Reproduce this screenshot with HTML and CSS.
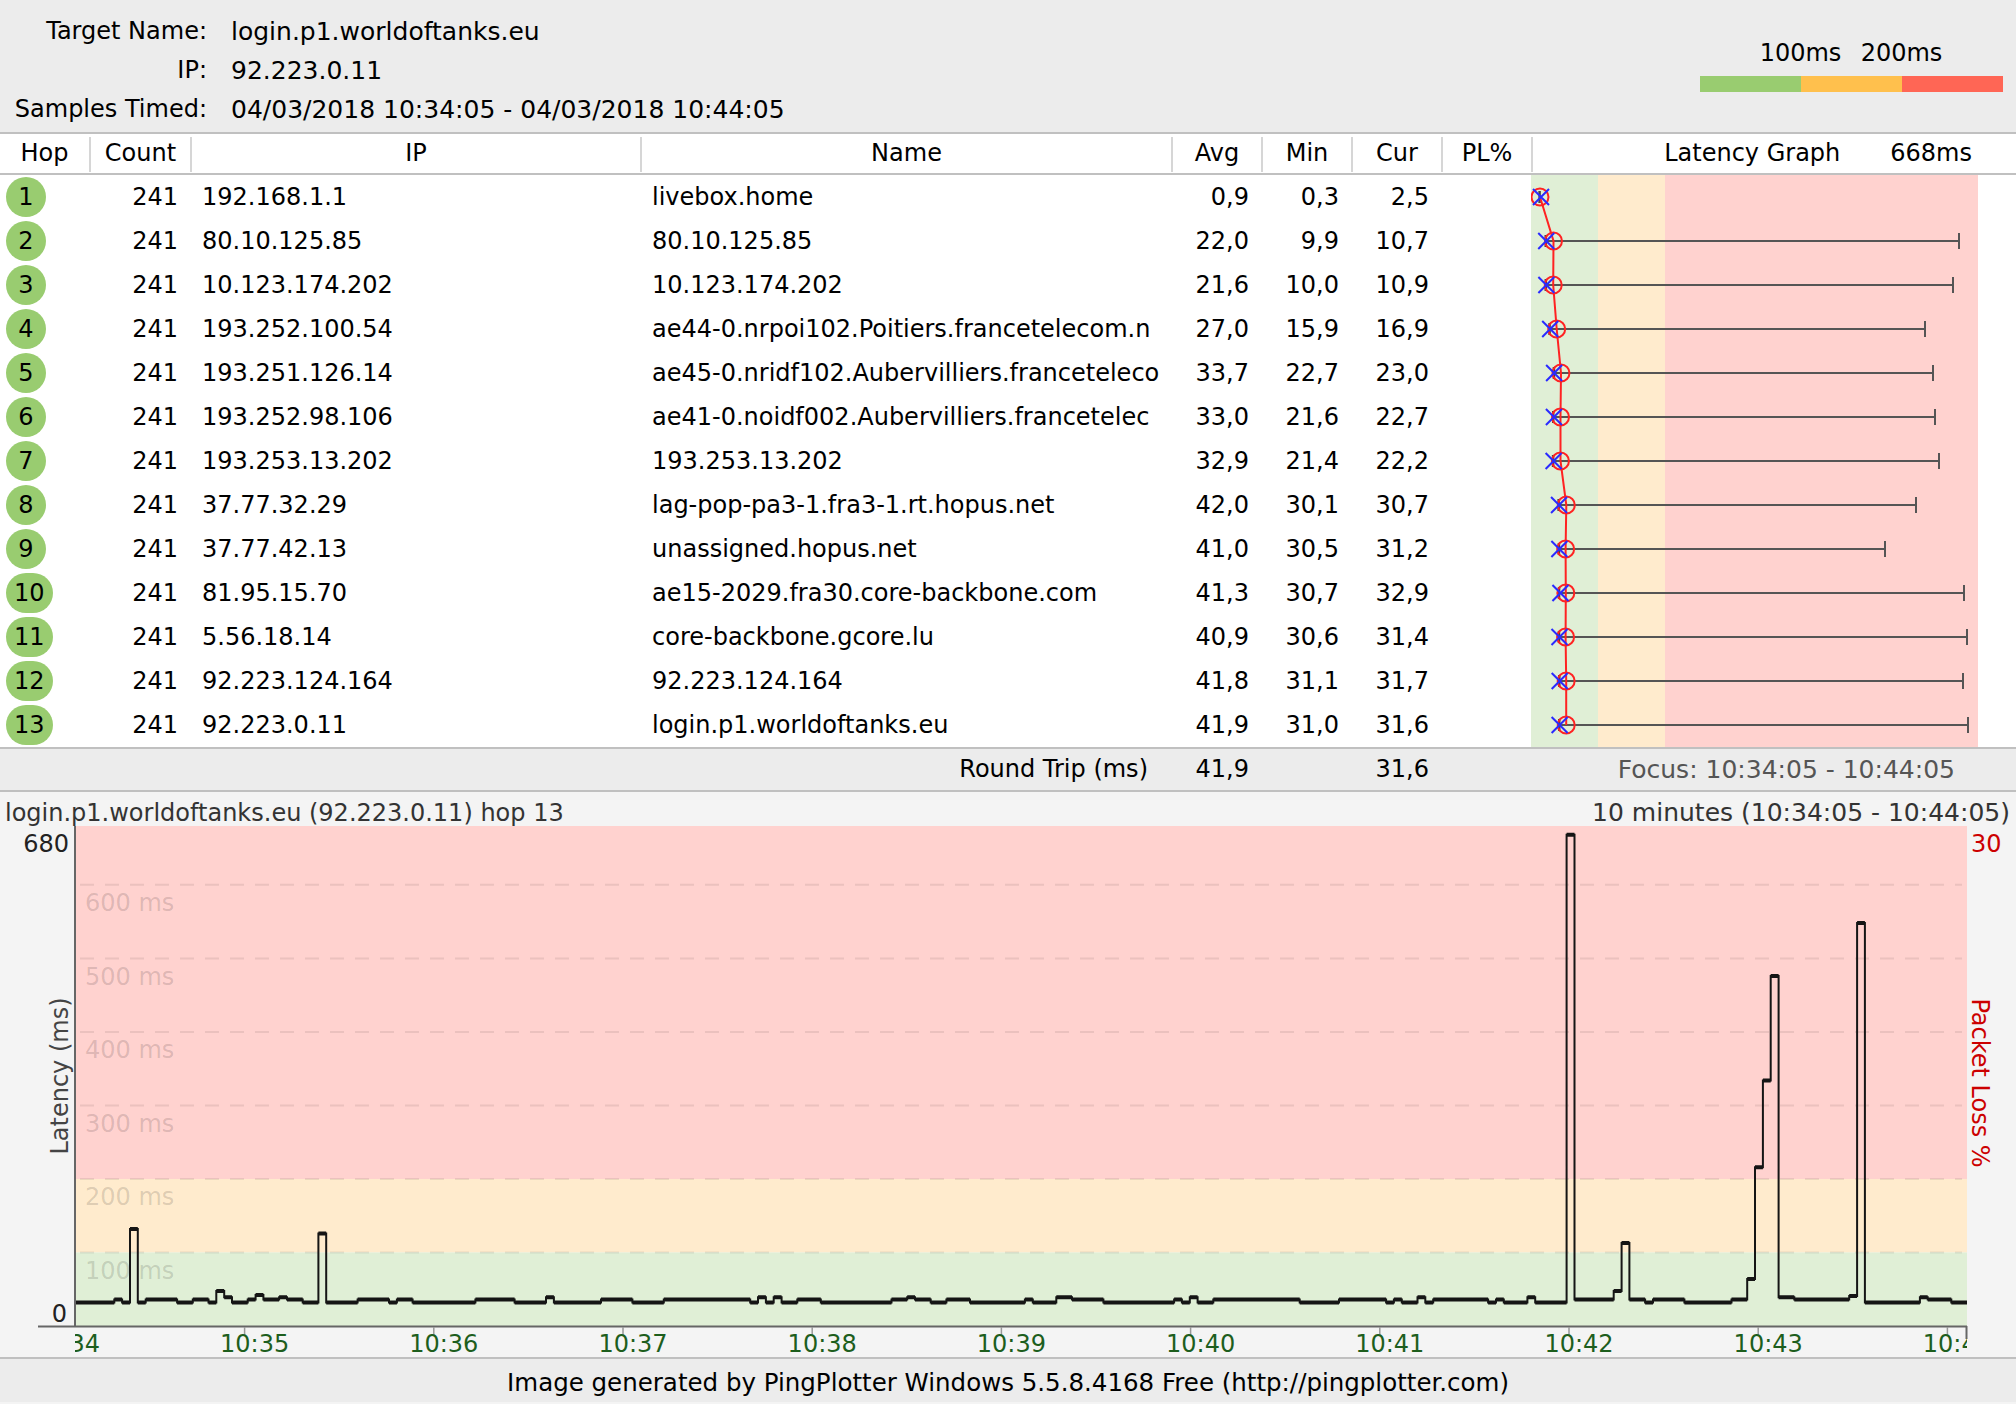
FILE: index.html
```html
<!DOCTYPE html>
<html lang="en">

<head>
  <meta charset="UTF-8">
  <title>PingPlotter - login.p1.worldoftanks.eu</title>
  <link rel="stylesheet" href="styles.css">
</head>

<body>
  <div class="summary">
    <div class="target-info">
      <span class="label">Target Name:</span><span>login.p1.worldoftanks.eu</span>
      <span class="label">IP:</span><span>92.223.0.11</span>
      <span class="label">Samples Timed:</span><span>04/03/2018 10:34:05 - 04/03/2018 10:44:05</span>
    </div>
    <div class="legend">
      <div class="legend-labels"><span>100ms</span><span>200ms</span></div>
      <div class="legend-bar"><span class="good"></span><span class="warn"></span><span class="bad"></span></div>
    </div>
  </div>

  <div class="hop-head">
    <div>Hop</div>
    <div>Count</div>
    <div>IP</div>
    <div>Name</div>
    <div>Avg</div>
    <div>Min</div>
    <div>Cur</div>
    <div>PL%</div>
    <div class="graph-head"><span>Latency Graph</span><span>668ms</span></div>
  </div>

  <div class="hops">
    <div class="hop"><span class="hop-num">1</span></div><div class="num">241</div><div class="ip">192.168.1.1</div><div class="name">livebox.home</div><div class="num">0,9</div><div class="num">0,3</div><div class="num">2,5</div><div></div>
    <div class="hop"><span class="hop-num">2</span></div><div class="num">241</div><div class="ip">80.10.125.85</div><div class="name">80.10.125.85</div><div class="num">22,0</div><div class="num">9,9</div><div class="num">10,7</div><div></div>
    <div class="hop"><span class="hop-num">3</span></div><div class="num">241</div><div class="ip">10.123.174.202</div><div class="name">10.123.174.202</div><div class="num">21,6</div><div class="num">10,0</div><div class="num">10,9</div><div></div>
    <div class="hop"><span class="hop-num">4</span></div><div class="num">241</div><div class="ip">193.252.100.54</div><div class="name">ae44-0.nrpoi102.Poitiers.francetelecom.n</div><div class="num">27,0</div><div class="num">15,9</div><div class="num">16,9</div><div></div>
    <div class="hop"><span class="hop-num">5</span></div><div class="num">241</div><div class="ip">193.251.126.14</div><div class="name">ae45-0.nridf102.Aubervilliers.franceteleco</div><div class="num">33,7</div><div class="num">22,7</div><div class="num">23,0</div><div></div>
    <div class="hop"><span class="hop-num">6</span></div><div class="num">241</div><div class="ip">193.252.98.106</div><div class="name">ae41-0.noidf002.Aubervilliers.francetelec</div><div class="num">33,0</div><div class="num">21,6</div><div class="num">22,7</div><div></div>
    <div class="hop"><span class="hop-num">7</span></div><div class="num">241</div><div class="ip">193.253.13.202</div><div class="name">193.253.13.202</div><div class="num">32,9</div><div class="num">21,4</div><div class="num">22,2</div><div></div>
    <div class="hop"><span class="hop-num">8</span></div><div class="num">241</div><div class="ip">37.77.32.29</div><div class="name">lag-pop-pa3-1.fra3-1.rt.hopus.net</div><div class="num">42,0</div><div class="num">30,1</div><div class="num">30,7</div><div></div>
    <div class="hop"><span class="hop-num">9</span></div><div class="num">241</div><div class="ip">37.77.42.13</div><div class="name">unassigned.hopus.net</div><div class="num">41,0</div><div class="num">30,5</div><div class="num">31,2</div><div></div>
    <div class="hop"><span class="hop-num wide">10</span></div><div class="num">241</div><div class="ip">81.95.15.70</div><div class="name">ae15-2029.fra30.core-backbone.com</div><div class="num">41,3</div><div class="num">30,7</div><div class="num">32,9</div><div></div>
    <div class="hop"><span class="hop-num wide">11</span></div><div class="num">241</div><div class="ip">5.56.18.14</div><div class="name">core-backbone.gcore.lu</div><div class="num">40,9</div><div class="num">30,6</div><div class="num">31,4</div><div></div>
    <div class="hop"><span class="hop-num wide">12</span></div><div class="num">241</div><div class="ip">92.223.124.164</div><div class="name">92.223.124.164</div><div class="num">41,8</div><div class="num">31,1</div><div class="num">31,7</div><div></div>
    <div class="hop"><span class="hop-num wide">13</span></div><div class="num">241</div><div class="ip">92.223.0.11</div><div class="name">login.p1.worldoftanks.eu</div><div class="num">41,9</div><div class="num">31,0</div><div class="num">31,6</div><div></div>
    <div class="hop-graph">
      <svg id="hop-graph" width="485" height="572" viewBox="0 0 485 572"></svg>
    </div>
  </div>

  <div class="round-trip">
    <div class="rt-label">Round Trip (ms)</div>
    <div class="num">41,9</div>
    <div></div>
    <div class="num">31,6</div>
    <div></div>
    <div class="focus">Focus: 10:34:05 - 10:44:05</div>
  </div>

  <div class="graph">
    <div class="graph-title">
      <span>login.p1.worldoftanks.eu (92.223.0.11) hop 13</span>
      <span class="span-info">10 minutes (10:34:05 - 10:44:05)</span>
    </div>
    <svg class="plot" width="2016" height="531" viewBox="0 0 2016 531">
      <defs>
        <clipPath id="time-clip"><rect x="75" y="500" width="1892" height="31"/></clipPath>
      </defs>
      <rect x="75" y="0" width="1892" height="353" fill="#ffd2cf"/>
      <rect x="75" y="353" width="1892" height="73.5" fill="#ffebcd"/>
      <rect x="75" y="426.5" width="1892" height="73.5" fill="#e0efd6"/>

      <g class="grid">
        <line x1="80" y1="58.8" x2="1962" y2="58.8"/>
        <line x1="80" y1="132.4" x2="1962" y2="132.4"/>
        <line x1="80" y1="205.9" x2="1962" y2="205.9"/>
        <line x1="80" y1="279.4" x2="1962" y2="279.4"/>
        <line x1="80" y1="353" x2="1962" y2="353"/>
        <line x1="80" y1="426.5" x2="1962" y2="426.5"/>
      </g>
      <g class="grid-labels">
        <text x="85" y="85">600 ms</text>
        <text x="85" y="158.5">500 ms</text>
        <text x="85" y="232">400 ms</text>
        <text x="85" y="305.5">300 ms</text>
        <text x="85" y="379">200 ms</text>
        <text x="85" y="452.5">100 ms</text>
      </g>

      <path id="latency-steps" class="latency-steps" d=""/>
      <path id="latency-levels" class="latency-levels" d=""/>

      <g class="axis">
        <line x1="75" y1="0" x2="75" y2="501"/>
        <line x1="38" y1="500.5" x2="1967" y2="500.5"/>
        <line x1="1966.5" y1="500" x2="1966.5" y2="513"/>
      </g>
      <g class="ticks">
        <line x1="244.6" y1="501" x2="244.6" y2="509"/>
        <line x1="433.8" y1="501" x2="433.8" y2="509"/>
        <line x1="623" y1="501" x2="623" y2="509"/>
        <line x1="812.2" y1="501" x2="812.2" y2="509"/>
        <line x1="1001.4" y1="501" x2="1001.4" y2="509"/>
        <line x1="1190.6" y1="501" x2="1190.6" y2="509"/>
        <line x1="1379.8" y1="501" x2="1379.8" y2="509"/>
        <line x1="1569" y1="501" x2="1569" y2="509"/>
        <line x1="1758.2" y1="501" x2="1758.2" y2="509"/>
        <line x1="1947.4" y1="501" x2="1947.4" y2="509"/>
      </g>
      <g class="time-labels" clip-path="url(#time-clip)">
        <text x="65.4" y="526">10:34</text>
        <text x="254.6" y="526">10:35</text>
        <text x="443.8" y="526">10:36</text>
        <text x="633" y="526">10:37</text>
        <text x="822.2" y="526">10:38</text>
        <text x="1011.4" y="526">10:39</text>
        <text x="1200.6" y="526">10:40</text>
        <text x="1389.8" y="526">10:41</text>
        <text x="1579" y="526">10:42</text>
        <text x="1768.2" y="526">10:43</text>
        <text x="1957.4" y="526">10:44</text>
      </g>

      <text class="y-value" x="69" y="26">680</text>
      <text class="y-value" x="67" y="496">0</text>
      <text class="axis-title" transform="translate(68 250) rotate(-90)">Latency (ms)</text>
      <text class="loss-title" transform="translate(1972 257) rotate(90)">Packet Loss %</text>
      <text class="loss-max" x="1971" y="26">30</text>
    </svg>
  </div>

  <footer>Image generated by PingPlotter Windows 5.5.8.4168 Free (http://pingplotter.com)</footer>

  <script>
    // min, avg, cur (ms) and the x where the max line ends (page px)
    const hops = [
      [0.3, 0.9, 2.5, 0],
      [9.9, 22.0, 10.7, 1959],
      [10.0, 21.6, 10.9, 1953],
      [15.9, 27.0, 16.9, 1925],
      [22.7, 33.7, 23.0, 1933],
      [21.6, 33.0, 22.7, 1935],
      [21.4, 32.9, 22.2, 1939],
      [30.1, 42.0, 30.7, 1916],
      [30.5, 41.0, 31.2, 1885],
      [30.7, 41.3, 32.9, 1964],
      [30.6, 40.9, 31.4, 1967],
      [31.1, 41.8, 31.7, 1963],
      [31.0, 41.9, 31.6, 1968]
    ];

    function drawHopGraph() {
      const sx = ms => 8.4 + ms * 0.64;
      let s = '<rect x="0" y="0" width="67" height="572" fill="#e0efd6"/>' +
        '<rect x="67" y="0" width="67" height="572" fill="#ffebcd"/>' +
        '<rect x="134" y="0" width="313" height="572" fill="#ffd2cf"/>';
      let avgLine = [];
      let marks = '';
      hops.forEach((h, i) => {
        const y = 22 + i * 44;
        const minX = sx(h[0]), avgX = sx(h[1]), curX = sx(h[2]);
        if (h[3]) {
          const maxX = h[3] - 1531;
          s += `<line class="range" x1="${minX}" y1="${y}" x2="${maxX}" y2="${y}"/>`;
          s += `<line class="range" x1="${maxX}" y1="${y - 8}" x2="${maxX}" y2="${y + 8}"/>`;
        }
        s += `<line class="min-tick" x1="${minX}" y1="${y - 6}" x2="${minX}" y2="${y + 6}"/>`;
        avgLine.push(avgX.toFixed(1) + ',' + y);
        marks += `<circle class="avg" cx="${avgX}" cy="${y}" r="8.5"/>`;
        marks += `<path class="cur" d="M${curX - 8},${y - 8}L${curX + 8},${y + 8}M${curX - 8},${y + 8}L${curX + 8},${y - 8}"/>`;
      });
      s += `<polyline class="avg-line" points="${avgLine.join(' ')}"/>` + marks;
      document.getElementById('hop-graph').innerHTML = s;
    }

    // step line: thin verticals, thick horizontal levels
    function drawLatencyLine() {
      const count = 241;
      const step = 1892 / count;
      const spikes = {
        7: 132, 18: 47.6, 23: 42, 31: 126, 190: 668, 196: 47.6, 197: 113,
        213: 64, 214: 216, 215: 334, 216: 476, 218: 39, 226: 41, 227: 548
      };
      let seed = 11;
      function rand() {
        seed = (seed * 16807) % 2147483647;
        return (seed - 1) / 2147483646;
      }
      let level = 36;
      let steps = '';
      let levels = '';
      for (let i = 0; i < count; i++) {
        if (rand() < 0.25) level = level === 36 ? 32 : 36;
        let v = level;
        if (rand() < 0.03) v = 39;
        if (spikes[i] !== undefined) v = spikes[i];
        const x0 = (75 + i * step).toFixed(1), x1 = (75 + (i + 1) * step).toFixed(1);
        const y = (500 - v * 500 / 680).toFixed(1);
        steps += (i === 0 ? 'M' : 'L') + x0 + ',' + y + 'L' + x1 + ',' + y;
        levels += 'M' + x0 + ',' + y + 'L' + x1 + ',' + y;
      }
      document.getElementById('latency-steps').setAttribute('d', steps);
      document.getElementById('latency-levels').setAttribute('d', levels);
    }

    drawHopGraph();
    drawLatencyLine();
  </script>
</body>

</html>
```

FILE: styles.css
```css
/* PingPlotter Trace-Export */
body {
  margin: 0;
  width: 2016px;
  font-family: "DejaVu Sans", Verdana, sans-serif;
  font-size: 24px;
  color: #000;
  background: #f4f4f4;
}

.summary {
  display: flex;
  justify-content: space-between;
  height: 132px;
  background: #ececec;
  border-bottom: 2px solid #c0c0c0;
}

.target-info {
  display: grid;
  grid-template-columns: 207px auto;
  column-gap: 24px;
  align-content: start;
  padding-top: 12px;
  font-size: 25px;
  line-height: 39px;
}

.target-info .label {
  text-align: right;
  font-size: 24px;
}

.legend {
  width: 303px;
  margin: 38px 13px 0 0;
}

.legend-labels {
  display: flex;
  padding-left: 50px;
  height: 30px;
  line-height: 30px;
  margin-bottom: 8px;
}

.legend-labels span {
  width: 101px;
  text-align: center;
}

.legend-bar {
  display: flex;
  height: 16px;
}

.legend-bar span {
  flex: 1;
}

.legend-bar .good { background: #99cc70; }
.legend-bar .warn { background: #ffc04d; }
.legend-bar .bad { background: #ff6655; }

/* Tabelle */
.hop-head,
.hops,
.round-trip {
  display: grid;
  grid-template-columns: 89px 101px 450px 531px 90px 90px 90px 90px 485px;
}

.hop-head {
  height: 39px;
  background: #fff;
  border-bottom: 2px solid #c0c0c0;
}

.hop-head > div {
  margin-top: 3px;
  height: 35px;
  line-height: 32px;
  text-align: center;
  border-left: 2px solid #d6d6d6;
}

.hop-head > div:first-child {
  border-left: none;
}

.hop-head .graph-head {
  display: flex;
  justify-content: flex-end;
  gap: 50px;
  padding-right: 44px;
}

.hops {
  grid-auto-rows: 44px;
  background: #fff;
  line-height: 44px;
  border-bottom: 2px solid #c0c0c0;
}

.hops > div {
  white-space: nowrap;
  overflow: hidden;
}

.hop {
  display: flex;
  align-items: center;
  padding-left: 6px;
}

.hop-num {
  display: inline-flex;
  align-items: center;
  justify-content: center;
  min-width: 40px;
  height: 40px;
  box-sizing: border-box;
  border-radius: 20px;
  background: #99cc70;
  line-height: 40px;
}

.hop-num.wide {
  padding: 0 8px;
}

.num {
  text-align: right;
  padding-right: 12px;
}

.ip,
.name {
  padding-left: 12px;
}

.hop-graph {
  grid-column: 9;
  grid-row: 1 / 14;
}

.hop-graph svg {
  display: block;
}

.range {
  stroke: #555;
  stroke-width: 2;
}

.min-tick {
  stroke: #444;
  stroke-width: 2.5;
}

.avg-line {
  fill: none;
  stroke: #ff2222;
  stroke-width: 2;
}

.avg {
  fill: none;
  stroke: #ff2222;
  stroke-width: 2;
}

.cur {
  stroke: #2a2aff;
  stroke-width: 2;
}

.round-trip {
  height: 41px;
  line-height: 41px;
  background: #ececec;
  border-bottom: 2px solid #c0c0c0;
}

.rt-label {
  grid-column: 1 / 5;
  text-align: right;
  padding-right: 23px;
}

.focus {
  text-align: right;
  padding-right: 61px;
  font-size: 25px;
  color: #555;
}

/* Verlaufsgrafik */
.graph {
  height: 565px;
  background: #f4f4f4;
}

.graph-title {
  display: flex;
  justify-content: space-between;
  height: 30px;
  padding: 4px 6px 0 5px;
  line-height: 34px;
  color: #333;
}

.graph-title .span-info {
  font-size: 25px;
}

.plot {
  display: block;
}

.plot text {
  font-family: "DejaVu Sans", Verdana, sans-serif;
  font-size: 24px;
}

.grid line {
  stroke: rgba(0, 0, 0, 0.08);
  stroke-width: 2;
  stroke-dasharray: 14 11;
}

.grid-labels text {
  fill: rgba(0, 0, 0, 0.15);
}

.latency-steps {
  fill: none;
  stroke: #151515;
  stroke-width: 2;
}

.latency-levels {
  fill: none;
  stroke: #151515;
  stroke-width: 4;
}

.axis line {
  stroke: #666;
  stroke-width: 2;
}

.ticks line {
  stroke: #999;
  stroke-width: 1.5;
}

.time-labels text {
  fill: #1d5e1d;
  text-anchor: middle;
}

.y-value {
  fill: #222;
  text-anchor: end;
}

.axis-title {
  fill: #444;
  text-anchor: middle;
}

.loss-title {
  fill: #cc0000;
  text-anchor: middle;
}

.loss-max {
  fill: #cc0000;
}

footer {
  height: 45px;
  box-sizing: border-box;
  padding-top: 3px;
  font-size: 24.5px;
  line-height: 42px;
  text-align: center;
  background: #ececec;
  border-top: 2px solid #c0c0c0;
}
```
